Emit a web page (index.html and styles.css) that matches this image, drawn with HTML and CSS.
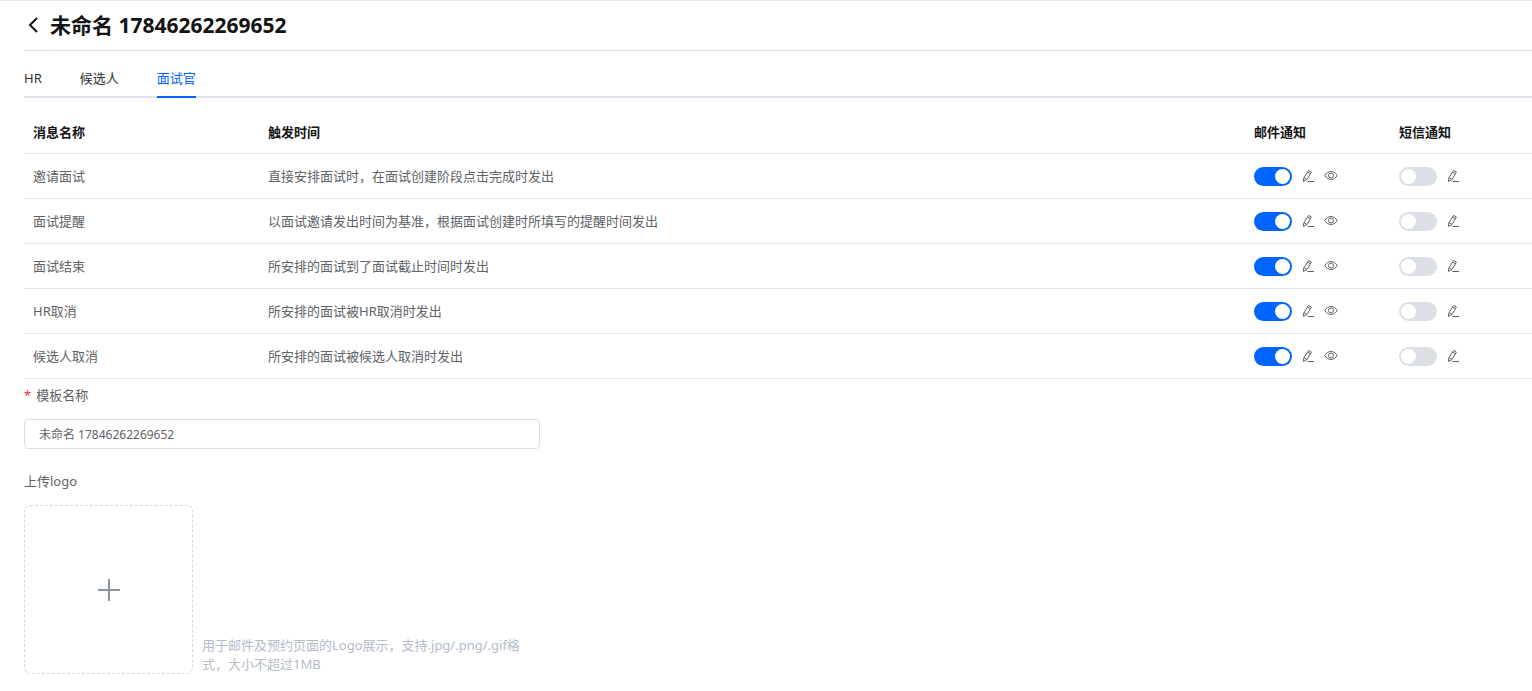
FILE: index.html
```
<!DOCTYPE html>
<html lang="zh-CN">

<head>
    <meta charset="UTF-8">
    <title>消息模板</title>
    <meta name="viewport" content="width=device-width, initial-scale=1.0" />
    <link rel="stylesheet" href="styles.css">
</head>

<body>
    <!-- 公用图标 -->
    <svg class="sprite" aria-hidden="true">
        <symbol id="icon-edit" viewBox="0 0 14 14">
            <path d="M7.6 1.4 10.4 3 6 10.6 2.4 12.4 2.8 9zM3.2 8.8 5.9 10.4M6.6 3.1 9.4 4.7M6.5 12.5H13" />
        </symbol>
        <symbol id="icon-view" viewBox="0 0 14 14">
            <path d="M.8 6.5C3.6 1.2 10.4 1.2 13.2 6.5 10.4 11.8 3.6 11.8.8 6.5z" />
            <circle cx="7" cy="6.5" r="2.5" />
        </symbol>
    </svg>

    <div class="page">
        <header class="header">
            <a class="back" href="#" aria-label="返回">
                <svg viewBox="0 0 18 18"><path d="M13 2 6 9l7 7" /></svg>
            </a>
            <h1 class="title">未命名 17846262269652</h1>
        </header>

        <nav class="tabs">
            <a class="tab" href="#">HR</a>
            <a class="tab" href="#">候选人</a>
            <a class="tab tab-active" href="#">面试官</a>
        </nav>

        <table class="table">
            <thead>
                <tr>
                    <th class="col-name">消息名称</th>
                    <th>触发时间</th>
                    <th class="col-email">邮件通知</th>
                    <th class="col-sms">短信通知</th>
                </tr>
            </thead>
            <tbody>
                <tr>
                    <td>邀请面试</td>
                    <td>直接安排面试时，在面试创建阶段点击完成时发出</td>
                    <td>
                        <div class="ops">
                            <input class="switch" type="checkbox" aria-label="邮件通知" checked>
                            <button class="icon-btn" type="button" aria-label="编辑"><svg><use href="#icon-edit" /></svg></button>
                            <button class="icon-btn" type="button" aria-label="预览"><svg><use href="#icon-view" /></svg></button>
                        </div>
                    </td>
                    <td>
                        <div class="ops">
                            <input class="switch" type="checkbox" aria-label="短信通知">
                            <button class="icon-btn" type="button" aria-label="编辑"><svg><use href="#icon-edit" /></svg></button>
                        </div>
                    </td>
                </tr>
                <tr>
                    <td>面试提醒</td>
                    <td>以面试邀请发出时间为基准，根据面试创建时所填写的提醒时间发出</td>
                    <td>
                        <div class="ops">
                            <input class="switch" type="checkbox" aria-label="邮件通知" checked>
                            <button class="icon-btn" type="button" aria-label="编辑"><svg><use href="#icon-edit" /></svg></button>
                            <button class="icon-btn" type="button" aria-label="预览"><svg><use href="#icon-view" /></svg></button>
                        </div>
                    </td>
                    <td>
                        <div class="ops">
                            <input class="switch" type="checkbox" aria-label="短信通知">
                            <button class="icon-btn" type="button" aria-label="编辑"><svg><use href="#icon-edit" /></svg></button>
                        </div>
                    </td>
                </tr>
                <tr>
                    <td>面试结束</td>
                    <td>所安排的面试到了面试截止时间时发出</td>
                    <td>
                        <div class="ops">
                            <input class="switch" type="checkbox" aria-label="邮件通知" checked>
                            <button class="icon-btn" type="button" aria-label="编辑"><svg><use href="#icon-edit" /></svg></button>
                            <button class="icon-btn" type="button" aria-label="预览"><svg><use href="#icon-view" /></svg></button>
                        </div>
                    </td>
                    <td>
                        <div class="ops">
                            <input class="switch" type="checkbox" aria-label="短信通知">
                            <button class="icon-btn" type="button" aria-label="编辑"><svg><use href="#icon-edit" /></svg></button>
                        </div>
                    </td>
                </tr>
                <tr>
                    <td>HR取消</td>
                    <td>所安排的面试被HR取消时发出</td>
                    <td>
                        <div class="ops">
                            <input class="switch" type="checkbox" aria-label="邮件通知" checked>
                            <button class="icon-btn" type="button" aria-label="编辑"><svg><use href="#icon-edit" /></svg></button>
                            <button class="icon-btn" type="button" aria-label="预览"><svg><use href="#icon-view" /></svg></button>
                        </div>
                    </td>
                    <td>
                        <div class="ops">
                            <input class="switch" type="checkbox" aria-label="短信通知">
                            <button class="icon-btn" type="button" aria-label="编辑"><svg><use href="#icon-edit" /></svg></button>
                        </div>
                    </td>
                </tr>
                <tr>
                    <td>候选人取消</td>
                    <td>所安排的面试被候选人取消时发出</td>
                    <td>
                        <div class="ops">
                            <input class="switch" type="checkbox" aria-label="邮件通知" checked>
                            <button class="icon-btn" type="button" aria-label="编辑"><svg><use href="#icon-edit" /></svg></button>
                            <button class="icon-btn" type="button" aria-label="预览"><svg><use href="#icon-view" /></svg></button>
                        </div>
                    </td>
                    <td>
                        <div class="ops">
                            <input class="switch" type="checkbox" aria-label="短信通知">
                            <button class="icon-btn" type="button" aria-label="编辑"><svg><use href="#icon-edit" /></svg></button>
                        </div>
                    </td>
                </tr>
            </tbody>
        </table>

        <form class="form">
            <div class="field">
                <label class="label" for="tpl-name"><span class="required">*</span>模板名称</label>
                <input class="input" id="tpl-name" type="text" value="未命名 17846262269652">
            </div>
            <div class="field">
                <label class="label" for="logo-btn">上传logo</label>
                <div class="upload">
                    <button class="upload-btn" id="logo-btn" type="button">
                        <svg viewBox="0 0 22 22"><path d="M11 0V22M0 11H22" /></svg>
                    </button>
                    <p class="hint">用于邮件及预约页面的Logo展示，支持.jpg/.png/.gif格式，大小不超过1MB</p>
                </div>
            </div>
        </form>
    </div>
</body>

</html>
```
FILE: styles.css
```
* {
    margin: 0;
    padding: 0;
    box-sizing: border-box;
}

body {
    background: #fff;
    border-top: 1px solid #e8ecf5;
    color: #606266;
    font-family: "Noto Sans", "Noto Sans CJK SC", sans-serif;
    font-size: 13px;
}

a {
    color: inherit;
    text-decoration: none;
}

.sprite {
    display: none;
}

.page {
    padding-left: 24px;
}

/* 标题 */
.header {
    display: flex;
    align-items: center;
    gap: 8px;
    height: 50px;
    padding-bottom: 1px;
    border-bottom: 1px solid #dcdfe6;
}

.back {
    color: #141414;
}

.back svg {
    display: block;
    width: 18px;
    height: 18px;
    fill: none;
    stroke: currentColor;
    stroke-width: 2;
}

.title {
    color: #141414;
    font-size: 21px;
    line-height: 30px;
}

/* 标签页 */
.tabs {
    display: flex;
    gap: 38px;
    padding-top: 10px;
    border-bottom: 2px solid #dfe2ec;
}

.tab {
    margin-bottom: -2px;
    border-bottom: 2px solid transparent;
    color: #303133;
    line-height: 35px;
}

.tab-active {
    border-color: #0065ff;
    color: #0065ff;
}

/* 消息列表 */
.table {
    width: 100%;
    border-collapse: separate;
    border-spacing: 0;
    table-layout: fixed;
}

.table th,
.table td {
    height: 45px;
    padding: 0 9px;
    border-bottom: 1px solid #dfe6ec;
    line-height: 20px;
    text-align: left;
}

.table th {
    height: 56px;
    padding-top: 12px;
    color: #141414;
}

.table .col-name {
    width: 235px;
}

.table .col-email {
    width: 145px;
}

.table .col-sms {
    width: 142px;
}

.ops {
    display: flex;
    align-items: center;
    gap: 9px;
}

.switch {
    display: flex;
    width: 38px;
    height: 19px;
    padding: 2px;
    border-radius: 10px;
    background: #dcdfe6;
    appearance: none;
    cursor: pointer;
}

.switch::before {
    content: "";
    width: 15px;
    height: 15px;
    border-radius: 50%;
    background: #fff;
}

.switch:checked {
    justify-content: flex-end;
    background: #0065ff;
}

.icon-btn {
    border: 0;
    background: none;
    color: #606266;
    cursor: pointer;
}

.icon-btn svg {
    display: block;
    width: 14px;
    height: 14px;
    fill: none;
    stroke: currentColor;
}

/* 模板设置 */
.form {
    max-width: 516px;
    padding-top: 1px;
}

.field {
    margin-bottom: 17px;
}

.label {
    display: block;
    margin-bottom: 9px;
    line-height: 30px;
}

.required {
    margin-right: 5px;
    color: #ff2b2b;
}

.input {
    display: block;
    width: 100%;
    height: 30px;
    padding: 0 14px;
    border: 1px solid #dcdfe6;
    border-radius: 4px;
    color: #606266;
    font-family: inherit;
    font-size: 12px;
}

.upload {
    display: flex;
    align-items: flex-end;
    gap: 9px;
}

.upload-btn {
    display: flex;
    flex: none;
    align-items: center;
    justify-content: center;
    width: 169px;
    height: 169px;
    border: 1px dashed #d9d9d9;
    border-radius: 6px;
    background: #fff;
    cursor: pointer;
}

.upload-btn svg {
    width: 22px;
    height: 22px;
    stroke: #8c939d;
    stroke-width: 2;
}

.hint {
    max-width: 330px;
    color: #b4bccc;
    line-height: 19px;
}
```
